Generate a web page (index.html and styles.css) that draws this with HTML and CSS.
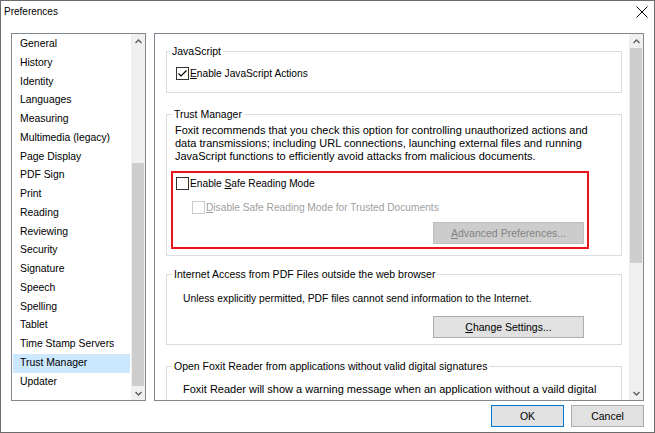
FILE: index.html
```html
<!DOCTYPE html>
<html lang="en">
<head>
    <meta charset="UTF-8">
    <title>Preferences</title>
    <link rel="stylesheet" href="styles.css">
</head>
<body>
    <div class="window">
        <div class="titlebar">
            <span class="title">Preferences</span>
            <span class="close">
                <svg width="12" height="12" viewBox="0 0 12 12"><path d="M0.5 0.5 L11.5 11.5 M11.5 0.5 L0.5 11.5" stroke="#000" stroke-width="1" fill="none"/></svg>
            </span>
        </div>

        <div class="main">
            <!-- Category list -->
            <div class="category-list">
                <ul class="items">
                    <li class="item">General</li>
                    <li class="item">History</li>
                    <li class="item">Identity</li>
                    <li class="item">Languages</li>
                    <li class="item">Measuring</li>
                    <li class="item">Multimedia (legacy)</li>
                    <li class="item">Page Display</li>
                    <li class="item">PDF Sign</li>
                    <li class="item">Print</li>
                    <li class="item">Reading</li>
                    <li class="item">Reviewing</li>
                    <li class="item">Security</li>
                    <li class="item">Signature</li>
                    <li class="item">Speech</li>
                    <li class="item">Spelling</li>
                    <li class="item">Tablet</li>
                    <li class="item">Time Stamp Servers</li>
                    <li class="item selected">Trust Manager</li>
                    <li class="item">Updater</li>
                </ul>
                <div class="scrollbar">
                    <div class="arrow"><svg width="7" height="5" viewBox="0 0 7 5"><path d="M0.5 4 L3.5 1 L6.5 4" stroke="#606060" stroke-width="1.4" fill="none"/></svg></div>
                    <div class="track at-bottom"><div class="thumb list-thumb"></div></div>
                    <div class="arrow"><svg width="7" height="5" viewBox="0 0 7 5"><path d="M0.5 1 L3.5 4 L6.5 1" stroke="#606060" stroke-width="1.4" fill="none"/></svg></div>
                </div>
            </div>

            <!-- Settings page -->
            <div class="settings">
                <div class="settings-content">
                    <fieldset class="group group-js">
                        <legend>JavaScript</legend>
                        <div class="group-body">
                            <label class="check-row">
                                <span class="checkbox checked">
                                    <svg width="11" height="11" viewBox="0 0 11 11"><path d="M1.5 5.5 L4 8 L9.5 2.5" stroke="#000" stroke-width="1.2" fill="none"/></svg>
                                </span>
                                <span><u>E</u>nable JavaScript Actions</span>
                            </label>
                        </div>
                    </fieldset>

                    <fieldset class="group group-trust">
                        <legend>Trust Manager</legend>
                        <div class="group-body">
                            <p class="desc">Foxit recommends that you check this option for controlling unauthorized actions and data transmissions; including URL connections, launching external files and running JavaScript functions to efficiently avoid attacks from malicious documents.</p>
                            <div class="highlight">
                                <label class="check-row">
                                    <span class="checkbox"></span>
                                    <span>Enable <u>S</u>afe Reading Mode</span>
                                </label>
                                <label class="check-row sub disabled">
                                    <span class="checkbox"></span>
                                    <span><u>D</u>isable Safe Reading Mode for Trusted Documents</span>
                                </label>
                                <div class="btn-row">
                                    <button class="btn" disabled><u>A</u>dvanced Preferences...</button>
                                </div>
                            </div>
                        </div>
                    </fieldset>

                    <fieldset class="group group-internet">
                        <legend>Internet Access from PDF Files outside the web browser</legend>
                        <div class="group-body">
                            <p class="note narrow">Unless explicitly permitted, PDF files cannot send information to the Internet.</p>
                            <div class="btn-row">
                                <button class="btn"><u>C</u>hange Settings...</button>
                            </div>
                        </div>
                    </fieldset>

                    <fieldset class="group group-open">
                        <legend>Open Foxit Reader from applications without valid digital signatures</legend>
                        <div class="group-body">
                            <p class="note">Foxit Reader will show a warning message when an application without a vaild digital</p>
                        </div>
                    </fieldset>
                </div>
                <div class="scrollbar">
                    <div class="arrow"><svg width="7" height="5" viewBox="0 0 7 5"><path d="M0.5 4 L3.5 1 L6.5 4" stroke="#606060" stroke-width="1.4" fill="none"/></svg></div>
                    <div class="track"><div class="thumb page-thumb"></div></div>
                    <div class="arrow"><svg width="7" height="5" viewBox="0 0 7 5"><path d="M0.5 1 L3.5 4 L6.5 1" stroke="#606060" stroke-width="1.4" fill="none"/></svg></div>
                </div>
            </div>
        </div>

        <div class="footer">
            <button class="btn dialog-btn default">OK</button>
            <button class="btn dialog-btn">Cancel</button>
        </div>
    </div>
</body>
</html>
```

FILE: styles.css
```css
* {
    margin: 0;
    padding: 0;
    box-sizing: border-box;
}

body {
    background: #ffffff;
    font-family: 'Liberation Sans', Arial, sans-serif;
    font-size: 11px;
    color: #000;
}

.window {
    width: 655px;
    height: 433px;
    border: 1px solid #6b6b6b;
    background: #ffffff;
    display: flex;
    flex-direction: column;
}

/* Title bar */
.titlebar {
    height: 32px;
    display: flex;
    justify-content: space-between;
    align-items: flex-start;
    padding: 4px 6px 0 3px;
}

.title {
    font-size: 10px;
    line-height: 14px;
}

.close {
    margin-top: 1px;
    display: flex;
}

/* Main area */
.main {
    height: 368px;
    display: flex;
    gap: 8px;
    padding: 0 10px;
}

.category-list {
    width: 135px;
    flex-shrink: 0;
    border: 1px solid #828790;
    display: flex;
}

.items {
    list-style: none;
    flex: 1;
    padding-top: 1px;
    font-size: 10.4px;
}

.item {
    height: 18.75px;
    line-height: 18.75px;
    margin: 0 1px;
    padding-left: 7px;
    white-space: nowrap;
}

.item.selected {
    background: #cce8ff;
}

/* Scroll bars */
.scrollbar {
    width: 14px;
    flex-shrink: 0;
    background: #f0f0f0;
    display: flex;
    flex-direction: column;
}

.arrow {
    height: 14px;
    display: flex;
    align-items: center;
    justify-content: center;
}

.track {
    flex: 1;
    display: flex;
    flex-direction: column;
}

.track.at-bottom {
    justify-content: flex-end;
}

.thumb {
    background: #cdcdcd;
    margin: 0 1px;
}

.list-thumb {
    height: 223px;
}

.page-thumb {
    height: 215px;
}

/* Settings page */
.settings {
    flex: 1;
    min-width: 0;
    border: 1px solid #828790;
    display: flex;
}

.settings-content {
    flex: 1;
    min-width: 0;
    overflow: hidden;
    padding: 11px 7px 0 11px;
}

.group {
    border: 1px solid #dcdcdc;
    min-width: 0;
}

.group legend {
    margin-left: 5px;
    padding: 0 2px;
    line-height: 13px;
    font-size: 10.5px;
}

.group-js legend {
    margin-left: 3px;
}

.group-js {
    padding: 9px 0 12px 0;
}

.group-js .group-body {
    padding-left: 9px;
}

.group-trust {
    margin-top: 15px;
    padding: 3px 0 6px 0;
}

.group-trust .group-body {
    padding-left: 8px;
}

.group-internet {
    margin-top: 12px;
    padding: 11px 0 6px 0;
}

.group-open {
    margin-top: 15px;
    padding: 10px 0 20px 0;
}

.group-internet .group-body,
.group-open .group-body {
    padding-left: 16px;
}

.check-row {
    display: flex;
    align-items: center;
    gap: 1px;
    height: 13px;
    line-height: 13px;
    font-size: 10.2px;
    white-space: nowrap;
}

.checkbox {
    width: 13px;
    height: 13px;
    border: 1px solid #333333;
    background: #fff;
    display: flex;
    align-items: center;
    justify-content: center;
}

.check-row.disabled {
    color: #a0a0a0;
}

.check-row.disabled .checkbox {
    border-color: #cccccc;
}

.check-row.sub {
    margin-top: 11px;
    padding-left: 16px;
}

.desc {
    line-height: 13px;
    padding-right: 30px;
}

.note {
    line-height: 13px;
    white-space: nowrap;
}

.note.narrow {
    font-size: 10.3px;
}

.highlight {
    margin: 8px 32px 0 -4px;
    border: 2px solid #e8141c;
    padding: 4px 3px 3px 3px;
}

.btn-row {
    display: flex;
    justify-content: flex-end;
}

.highlight .btn-row {
    margin-top: 8px;
}

.group-internet .btn-row {
    margin-top: 11px;
    padding-right: 37px;
}

.btn {
    font-family: inherit;
    font-size: 10.5px;
    width: 151px;
    height: 22px;
    background: #e1e1e1;
    border: 1px solid #adadad;
    color: #000;
}

.btn:disabled {
    background: #cccccc;
    border-color: #bfbfbf;
    color: #838383;
}

/* Footer buttons */
.footer {
    display: flex;
    justify-content: flex-end;
    gap: 7px;
    padding: 4px 10px 0 0;
}

.dialog-btn {
    width: 73px;
}

.dialog-btn.default {
    border-color: #0078d7;
}
```
